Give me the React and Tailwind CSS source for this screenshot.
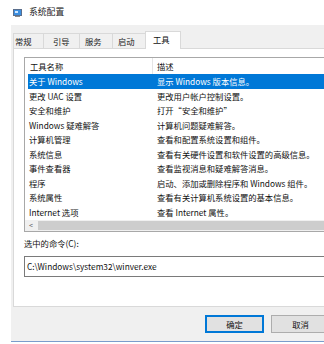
import React from "react";

const rows = [
  ["关于 Windows", "显示 Windows 版本信息。"],
  ["更改 UAC 设置", "更改用户帐户控制设置。"],
  ["安全和维护", "打开“安全和维护”"],
  ["Windows 疑难解答", "计算机问题疑难解答。"],
  ["计算机管理", "查看和配置系统设置和组件。"],
  ["系统信息", "查看有关硬件设置和软件设置的高级信息。"],
  ["事件查看器", "查看监视消息和疑难解答消息。"],
  ["程序", "启动、添加或删除程序和 Windows 组件。"],
  ["系统属性", "查看有关计算机系统设置的基本信息。"],
  ["Internet 选项", "查看 Internet 属性。"],
];

const tabs = [
  { label: "常规", w: "w-[30px]", pl: "pl-[1px]" },
  { label: "引导", w: "w-[36px]", pl: "pl-[9px]" },
  { label: "服务", w: "w-[33px]", pl: "pl-[5px]" },
  { label: "启动", w: "w-[33px]", pl: "pl-[5px]" },
];

export default function App() {
  return (
    <div className="w-[324px] h-[344px] bg-white overflow-hidden relative font-['Noto_Sans_CJK_SC',sans-serif] text-[8.3px] leading-none text-[#111]">
      {/* title bar */}
      <div className="h-[25px] flex items-center pl-[13px] gap-[7px]">
        <svg width="9" height="8" viewBox="0 0 9 8">
          <rect x="0" y="0" width="9" height="7" fill="#5a6e8c" />
          <rect x="1" y="1" width="7" height="5" fill="#3c8fe0" />
          <rect x="2" y="2" width="3" height="2" fill="#cfe6ff" />
          <rect x="2" y="7" width="5" height="1" fill="#8a8a8a" />
        </svg>
        <span className="text-[8.8px] text-[#222]">系统配置</span>
      </div>

      {/* dialog body */}
      <div className="ml-[11px] w-[340px] h-[317px] bg-[#f0f0f0] border-b border-[#7a9ccc] flex flex-col">
        {/* tabs */}
        <div className="h-[23px] flex items-end pl-[2px] relative z-10">
          {tabs.map((t) => (
            <div
              key={t.label}
              className={`${t.w} ${t.pl} h-[15px] flex items-center border-t border-l border-[#d9d9d9] bg-[#f0f0f0] text-[#222]`}
            >
              {t.label}
            </div>
          ))}
          <div className="w-[36px] pl-[7px] h-[18px] mb-[-1px] flex items-center border-t border-l border-r border-[#d9d9d9] bg-white pb-[2px]">
            工具
          </div>
        </div>

        {/* panel */}
        <div className="ml-[2px] w-[340px] h-[259px] bg-white border border-[#d9d9d9] pl-[10px] pt-[8px] flex flex-col">
          {/* list view */}
          <div className="w-[330px] border border-[#a8a8a8] flex flex-col">
            <div className="h-[16px] flex items-center">
              <div className="w-[128px] h-full flex items-center pl-[5px] border-r border-[#e5e5e5]">
                工具名称
              </div>
              <div className="pl-[4px]">描述</div>
            </div>
            {rows.map(([a, b], i) => (
              <div
                key={a}
                className={`h-[14.5px] ml-[3px] flex items-center ${
                  i === 0 ? "bg-[#0078d7] text-white" : ""
                }`}
              >
                <div className="w-[126px] pl-[1px] whitespace-nowrap">{a}</div>
                <div className="pl-[3px] whitespace-nowrap">{b}</div>
              </div>
            ))}
            {/* horizontal scrollbar */}
            <div className="h-[11px] mt-[0.5px] flex items-center bg-[#f0f0f0]">
              <div className="w-[12px] h-[11px] flex items-center justify-center text-[7px] text-[#606060]">
                &lt;
              </div>
              <div className="ml-[1px] w-[310px] h-[9px] bg-[#cdcdcd]" />
            </div>
          </div>

          <div className="mt-[7px] h-[10px] flex items-center">选中的命令(C):</div>

          <div className="mt-[7px] w-[330px] h-[21px] border border-[#7a7a7a] flex items-center pl-[2px]">
            C:\Windows\system32\winver.exe
          </div>
        </div>

        {/* buttons */}
        <div className="mt-[8px] flex pl-[194px] gap-[7px]">
          <div className="w-[59px] h-[18px] bg-[#e1e1e1] border border-[#0078d7] shadow-[inset_0_0_0_1px_#0078d7] flex items-center justify-center">
            确定
          </div>
          <div className="w-[59px] h-[18px] bg-[#e1e1e1] border border-[#adadad] flex items-center justify-center">
            取消
          </div>
        </div>
      </div>
    </div>
  );
}
